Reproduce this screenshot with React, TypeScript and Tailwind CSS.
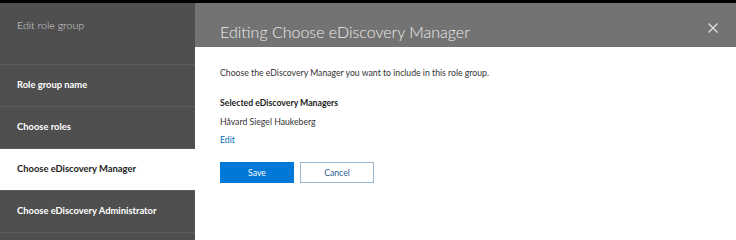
import React from "react";

const font = { fontFamily: 'Lato, "Open Sans", sans-serif' };

export default function App() {
  return (
    <div className="w-[736px] h-[240px] flex flex-col overflow-hidden bg-white" style={font}>
      <div className="h-[3px] bg-black shrink-0" />
      <div className="flex flex-1 min-h-0">
        <div className="w-[195px] bg-[#4f4f4f] flex flex-col shrink-0">
          <div className="h-[62px] pl-[17px] pt-[15px] leading-[14px] text-[10.6px] font-light text-[#d6d6d6] border-b border-[#5e5e5e]">
            Edit role group
          </div>
          <div className="h-[42px] pl-[17px] flex items-center text-[9.4px] font-bold text-white border-b border-[#5e5e5e]">
            Role group name
          </div>
          <div className="h-[42px] pl-[17px] flex items-center text-[9.4px] font-bold text-white border-b border-[#5e5e5e]">
            Choose roles
          </div>
          <div className="h-[42px] pl-[17px] flex items-center text-[9.4px] font-bold text-[#222] bg-white border-b border-[#5e5e5e]">
            Choose eDiscovery Manager
          </div>
          <div className="h-[42px] pl-[17px] flex items-center text-[9.4px] font-bold text-white border-b border-[#5e5e5e]">
            Choose eDiscovery Administrator
          </div>
        </div>
        <div className="flex-1 flex flex-col">
          <div className="h-[44px] bg-[#737373] flex items-center justify-between pl-[25px] pr-[18px] shrink-0">
            <span className="text-[16px] leading-[20px] font-light text-[#ececec] pt-[14px]">Editing Choose eDiscovery Manager</span>
            <svg width="10" height="10" viewBox="0 0 10 10" className="mt-[6px]">
              <path d="M0.5 0.5 L9.5 9.5 M9.5 0.5 L0.5 9.5" stroke="#e8e8e8" strokeWidth="1.1" />
            </svg>
          </div>
          <div className="pl-[25px] pt-[19px] flex flex-col text-[8.7px] text-[#333]">
            <div className="leading-[14px]">Choose the eDiscovery Manager you want to include in this role group.</div>
            <div className="mt-[16px] leading-[14px] font-bold text-[#222]">Selected eDiscovery Managers</div>
            <div className="mt-[5px] leading-[14px]">Håvard Siegel Haukeberg</div>
            <div className="mt-[4px] leading-[14px] text-[#0f6cbd]">Edit</div>
            <div className="mt-[15px] flex gap-[6px]">
              <button className="w-[74px] h-[21px] bg-[#0078d7] text-white text-[8.7px]">Save</button>
              <button className="w-[74px] h-[21px] bg-white border border-[#98b6cf] text-[#2b5f8f] text-[8.7px]">Cancel</button>
            </div>
          </div>
        </div>
      </div>
    </div>
  );
}
